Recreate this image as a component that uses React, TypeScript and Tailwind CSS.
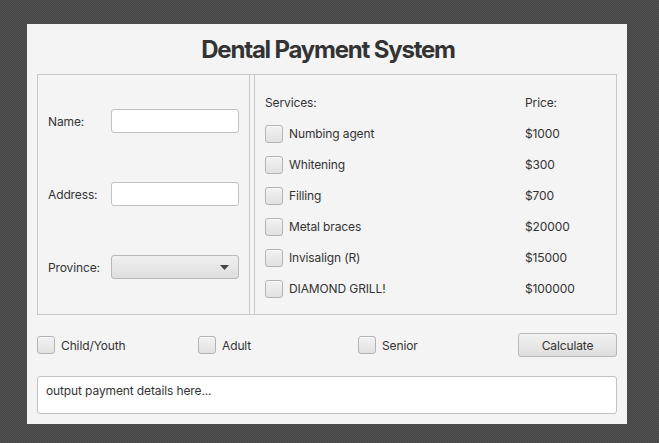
import React from "react";

const font = { fontFamily: "Inter, 'Noto Sans', sans-serif" };

function Box() {
  return (
    <span className="inline-block w-[18px] h-[18px] shrink-0 rounded-[3px] border border-[#b3b3b3] bg-gradient-to-b from-[#f2f2f2] to-[#e1e1e1] shadow-[inset_0_1px_0_#fafafa]" />
  );
}

const services: [string, string][] = [
  ["Numbing agent", "$1000"],
  ["Whitening", "$300"],
  ["Filling", "$700"],
  ["Metal braces", "$20000"],
  ["Invisalign (R)", "$15000"],
  ["DIAMOND GRILL!", "$100000"],
];

export default function App() {
  return (
    <div
      className="w-[659px] h-[443px] pt-[24px] pl-[27px] bg-[#4a4a4a] bg-[repeating-conic-gradient(#444444_0_25%,#525252_0_50%)] bg-[length:2px_2px] text-[#333333] text-[12px] tracking-[-0.01em]"
      style={font}
    >
      <div className="w-[600px] h-[400px] bg-[#f4f4f4] px-[10px] flex flex-col">
        <div className="h-[50px] pt-[2px] pl-[2px] flex items-center justify-center">
          <h1 className="text-[24px] font-bold tracking-[-0.05em] text-[#333333] leading-none">
            Dental Payment System
          </h1>
        </div>
        <div className="h-[241px] border border-[#c8c8c8] flex">
          <div className="w-[211px] pl-[10px] pt-[34px] flex flex-col gap-[49px]">
            <div className="flex items-center h-[24px]">
              <span className="w-[63px] pt-[2px]">Name:</span>
              <div className="w-[128px] h-[24px] rounded-[3px] border border-[#c2c2c2] bg-white" />
            </div>
            <div className="flex items-center h-[24px]">
              <span className="w-[63px] pt-[2px]">Address:</span>
              <div className="w-[128px] h-[24px] rounded-[3px] border border-[#c2c2c2] bg-white" />
            </div>
            <div className="flex items-center h-[24px]">
              <span className="w-[63px] pt-[2px]">Province:</span>
              <div className="w-[128px] h-[24px] rounded-[3px] border border-[#b8b8b8] bg-gradient-to-b from-[#f0f0f0] to-[#dedede] flex items-center justify-end pr-[9px]">
                <svg width="9" height="5" viewBox="0 0 9 5">
                  <path d="M0 0 L9 0 L4.5 5 Z" fill="#444444" />
                </svg>
              </div>
            </div>
          </div>
          <div className="w-[6px] border-l border-r border-[#c8c8c8]" />
          <div className="flex-1 pl-[10px] pt-[12px] flex flex-col">
            <div className="h-[31px] flex items-center">
              <span className="w-[260px] pt-[1px]">Services:</span>
              <span className="pt-[1px]">Price:</span>
            </div>
            {services.map(([n, p]) => (
              <div key={n} className="h-[31px] flex items-center">
                <div className="w-[260px] flex items-center gap-[6px]">
                  <Box />
                  <span className="pt-[1px]">{n}</span>
                </div>
                <span>{p}</span>
              </div>
            ))}
          </div>
        </div>
        <div className="mt-[18px] h-[24px] grid grid-cols-[161px_160px_160px_99px] items-center">
          <div className="flex items-center gap-[6px]">
            <Box />
            <span className="pt-[2px]">Child/Youth</span>
          </div>
          <div className="flex items-center gap-[6px]">
            <Box />
            <span className="pt-[2px]">Adult</span>
          </div>
          <div className="flex items-center gap-[6px]">
            <Box />
            <span className="pt-[2px]">Senior</span>
          </div>
          <button className="h-[24px] pt-[1px] rounded-[3px] border border-[#b8b8b8] bg-gradient-to-b from-[#f2f2f2] to-[#dedede] text-[#333333] flex items-center justify-center">
            Calculate
          </button>
        </div>
        <div className="mt-[19px] h-[38px] rounded-[3px] border border-[#c2c2c2] bg-white px-[8px] pt-[5px]">
          output payment details here...
        </div>
      </div>
    </div>
  );
}
